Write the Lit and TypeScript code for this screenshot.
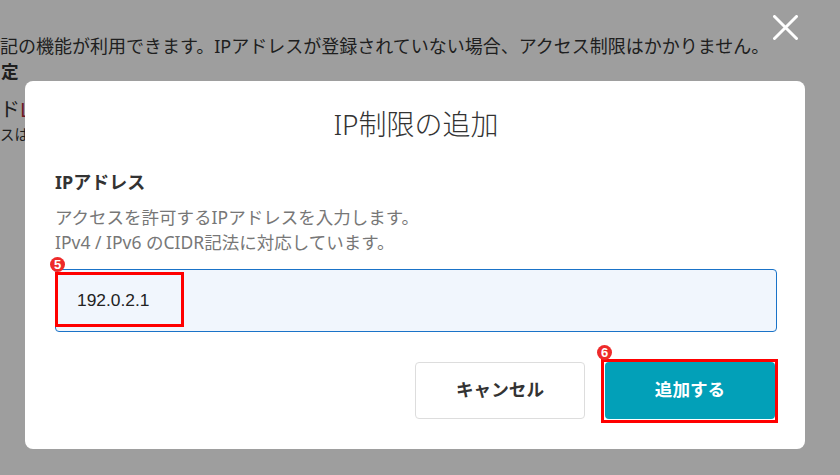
import { LitElement, html, css } from "lit";
import { customElement } from "lit/decorators.js";

const sans = css`"Noto Sans", "Noto Sans CJK JP", sans-serif`;

@customElement("app-root")
export class AppRoot extends LitElement {
  static styles = css`
    :host {
      display: block;
      position: relative;
      width: 840px;
      height: 475px;
      overflow: hidden;
      background: #fff;
      font-family: ${sans};
      color: #333;
    }
    .page {
      padding-top: 33px;
      white-space: nowrap;
    }
    .page p {
      margin: 0;
    }
    .lead {
      font-size: 18px;
      line-height: 26px;
    }
    .sub {
      font-size: 17.6px;
      line-height: 24px;
      font-weight: 700;
      padding-left: 1px;
    }
    .link-row {
      font-size: 20px;
      line-height: 30px;
      margin-top: 12px !important;
    }
    .link-row span {
      color: #b02a37;
    }
    .note {
      font-size: 14.4px;
      line-height: 20px;
    }
    .overlay {
      position: absolute;
      inset: 0;
      background: rgba(0, 0, 0, 0.38);
    }
    .close {
      position: absolute;
      left: 773px;
      top: 15px;
      width: 25px;
      height: 25px;
    }
    .modal {
      position: absolute;
      left: 25px;
      top: 81px;
      width: 780px;
      height: 368px;
      box-sizing: border-box;
      padding: 22px 28px 0 30px;
      background: #fff;
      border-radius: 8px;
    }
    h2 {
      margin: 0 0 25px;
      font-size: 28px;
      line-height: 42px;
      font-weight: 300;
      text-align: center;
      color: #333;
    }
    .label {
      font-size: 18px;
      line-height: 24px;
      font-weight: 700;
      color: #333;
    }
    .help {
      margin-top: 11px;
      font-size: 17.5px;
      line-height: 25px;
      color: #777;
    }
    .field {
      position: relative;
      margin-top: 14px;
      height: 63px;
      box-sizing: border-box;
      border: 1px solid #1a73c8;
      border-radius: 4px;
      background: #f1f6fd;
      display: flex;
      align-items: center;
      padding-left: 21px;
      font-family: "Liberation Sans", Arial, sans-serif;
      font-size: 17.4px;
      color: #222;
    }
    .mark {
      position: absolute;
      box-sizing: border-box;
      border: 3px solid #f00;
    }
    .mark-input {
      left: -1px;
      top: 2px;
      width: 129px;
      height: 55px;
    }
    .badge {
      position: absolute;
      width: 15px;
      height: 15px;
      border-radius: 50%;
      background: #ee2a2a;
      color: #fff;
      font-family: "Liberation Sans", Arial, sans-serif;
      font-size: 13px;
      line-height: 15px;
      font-weight: 700;
      text-align: center;
    }
    .badge-input {
      left: -6px;
      top: -13px;
    }
    .actions {
      display: flex;
      justify-content: flex-end;
      gap: 20px;
      margin-top: 30px;
      padding-right: 2px;
    }
    button {
      position: relative;
      width: 170px;
      height: 57px;
      box-sizing: border-box;
      border-radius: 4px;
      font-family: inherit;
      font-size: 17.6px;
      font-weight: 700;
      padding: 0 0 4px;
    }
    .cancel {
      background: #fff;
      border: 1px solid #ddd;
      color: #333;
    }
    .submit {
      background: #02a0b8;
      border: none;
      color: #fff;
    }
    .mark-submit {
      left: -4px;
      top: -3px;
      right: -3px;
      bottom: -4px;
    }
    .badge-submit {
      left: -8px;
      top: -17px;
    }
  `;

  render() {
    return html`
      <div class="page">
        <p class="lead">記の機能が利用できます。IPアドレスが登録されていない場合、アクセス制限はかかりません。</p>
        <p class="sub">定</p>
        <p class="link-row">ド<span>L</span></p>
        <p class="note">スは</p>
      </div>
      <div class="overlay"></div>
      <svg class="close" viewBox="0 0 25 25" aria-label="閉じる">
        <path d="M1.5 1.5 23.5 23.5M23.5 1.5 1.5 23.5" stroke="#fff" stroke-width="3" stroke-linecap="round" fill="none" />
      </svg>
      <section class="modal">
        <h2>IP制限の追加</h2>
        <div class="label">IPアドレス</div>
        <div class="help">アクセスを許可するIPアドレスを入力します。<br />IPv4 / IPv6 のCIDR記法に対応しています。</div>
        <div class="field">
          192.0.2.1
          <span class="mark mark-input"></span>
          <span class="badge badge-input">5</span>
        </div>
        <div class="actions">
          <button class="cancel">キャンセル</button>
          <button class="submit">
            追加する
            <span class="mark mark-submit"></span>
            <span class="badge badge-submit">6</span>
          </button>
        </div>
      </section>
    `;
  }
}
